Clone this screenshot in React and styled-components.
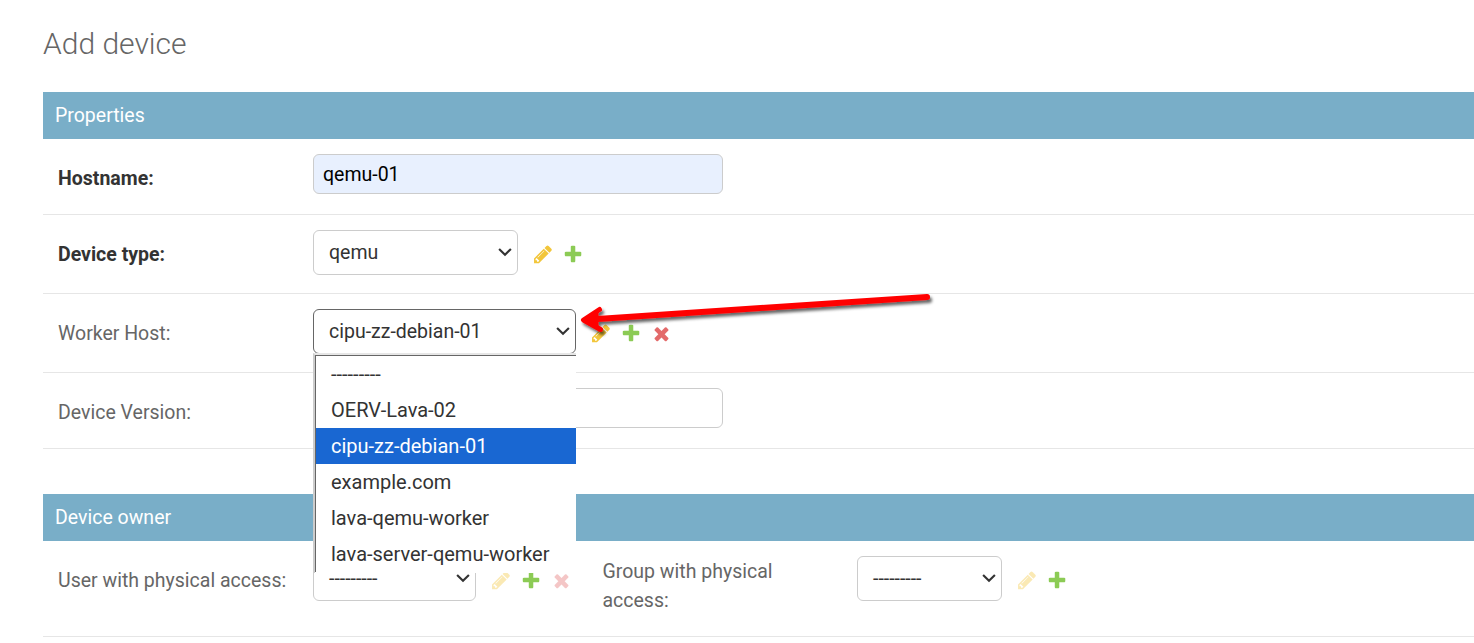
import React from "react";
import styled, { createGlobalStyle } from "styled-components";

const GlobalStyle = createGlobalStyle`
  *, *::before, *::after { box-sizing: border-box; }
  html, body { margin: 0; background: #fff; }
  body {
    font-family: Roboto, "Liberation Sans", sans-serif;
    font-size: 19.5px;
    color: #333;
    overflow: hidden;
  }
`;

const Page = styled.main`
  position: relative;
  width: 100%;
  height: 643px;
  padding: 26px 0 0 43px;
  overflow: hidden;
`;

const Title = styled.h1`
  margin: 0 0 30px;
  height: 36px;
  font-size: 30px;
  line-height: 36px;
  font-weight: 300;
  color: #666;
`;

const Fieldset = styled.section`
  margin-bottom: 45px;
`;

const SectionTitle = styled.h2`
  margin: 0;
  height: 47px;
  padding: 0 12px;
  font-size: 19.5px;
  line-height: 47px;
  font-weight: 400;
  color: #fff;
  background: #79aec8;
`;

const Row = styled.div`
  display: flex;
  align-items: flex-start;
  min-height: ${(p) => p.$height || 76}px;
  padding: 15px;
  border-bottom: 1px solid #e6e6e6;
`;

const Label = styled.label`
  flex: none;
  width: 255px;
  padding: ${(p) => (p.$wrapped ? "1px 40px 0 0.5px" : "10px 0 0")};
  line-height: 29px;
  color: ${(p) => (p.$required ? "#333" : "#666")};
  font-weight: ${(p) => (p.$required ? 700 : 400)};
`;

const FieldBox = styled.div`
  display: flex;
  flex: none;
  width: ${(p) => p.$width || "auto"};
`;

const TextInput = styled.input`
  width: 410px;
  height: 40px;
  padding: 0 9px;
  border: 1px solid #ccc;
  border-radius: 6px;
  font: inherit;
  color: #000;
  outline: none;
  background: ${(p) => (p.$filled ? "#e8f0fe" : "#fff")};
`;

const SelectWrap = styled.div`
  position: relative;
`;

const SelectButton = styled.div`
  display: flex;
  align-items: center;
  justify-content: space-between;
  width: ${(p) => p.$width}px;
  height: 45px;
  padding: 0 5px 1px 15px;
  border: 1px solid ${(p) => (p.$open ? "#666" : "#ccc")};
  border-radius: 6px;
  background: #fff;
`;

const Menu = styled.ul`
  position: absolute;
  z-index: 2;
  top: 44px;
  left: 0;
  width: 263px;
  height: 220px;
  margin: 0;
  padding: 0;
  list-style: none;
  font-size: 20px;
  background: #fff;
  border-left: 2px solid #ccc;
  border-top: 2px solid #e6e6e6;
  overflow: hidden;
`;

const MenuInner = styled.div`
  border-left: 1px solid #666;
  border-top: 1px solid #666;
`;

const Option = styled.li`
  height: 36px;
  padding-left: 15px;
  line-height: 36px;
  color: ${(p) => (p.$selected ? "#fff" : "#333")};
  background: ${(p) => (p.$selected ? "#1967d2" : "#fff")};
`;

const Actions = styled.div`
  display: flex;
  gap: 9.2px;
  padding: 13.5px 0 0 14.5px;
`;

const Icon = styled.svg`
  display: block;
  width: 21px;
  height: 21px;
  opacity: ${(p) => (p.$faded ? 0.3 : 0.8)};
`;

const Pointer = styled.svg`
  position: absolute;
  z-index: 3;
  left: 570px;
  top: 285px;
  pointer-events: none;
`;

const PENCIL =
  "M491 1536l91-91-235-235-91 91v107h128v128h107zm523-928q0-22-22-22-10 0-17 7l-542 542q-7 7-7 17 0 22 22 22 10 0 17-7l542-542q7-7 7-17zm-54-192l416 416-832 832h-416v-416zm683 96q0 53-37 90l-166 166-416-416 166-165q36-38 90-38 53 0 91 38l235 234q37 39 37 91z";
const PLUS =
  "M1600 796v192q0 40-28 68t-68 28h-416v416q0 40-28 68t-68 28h-192q-40 0-68-28t-28-68v-416h-416q-40 0-68-28t-28-68v-192q0-40 28-68t68-28h416v-416q0-40 28-68t68-28h192q40 0 68 28t28 68v416h416q40 0 68 28t28 68z";
const CROSS =
  "M1490 1322q0 40-28 68l-136 136q-28 28-68 28t-68-28l-294-294-294 294q-28 28-68 28t-68-28l-136-136q-28-28-28-68t28-68l294-294-294-294q-28-28-28-68t28-68l136-136q28-28 68-28t68 28l294 294 294-294q28-28 68-28t68 28l136 136q28 28 28 68t-28 68l-294 294 294 294q28 28 28 68z";

const Glyph = ({ d, fill, faded, origin = "0 0" }) => (
  <Icon viewBox={`${origin} 1792 1792`} $faded={faded}>
    <path d={d} fill={fill} />
  </Icon>
);

const RelatedActions = ({ faded, removable }) => (
  <Actions>
    <Glyph d={PENCIL} fill="#efb80b" faded={faded} origin="40 20" />
    <Glyph d={PLUS} fill="#70bf2b" origin="40 40" />
    {removable && <Glyph d={CROSS} fill="#dd4646" faded={faded} />}
  </Actions>
);

const Chevron = () => (
  <svg width="15" height="10" viewBox="0 0 15 10" fill="none">
    <path d="M2.1 1.9l5.9 5.9 5.9-5.9" stroke="#333" strokeWidth="2.1" />
  </svg>
);

const Select = ({ value, width, open, children }) => (
  <SelectWrap>
    <SelectButton $width={width} $open={open}>
      <span>{value}</span>
      <Chevron />
    </SelectButton>
    {children}
  </SelectWrap>
);

const hosts = [
  "---------",
  "OERV-Lava-02",
  "cipu-zz-debian-01",
  "example.com",
  "lava-qemu-worker",
  "lava-server-qemu-worker",
];

export default function App() {
  return (
    <>
      <GlobalStyle />
      <Page>
        <Title>Add device</Title>
        <Fieldset>
          <SectionTitle>Properties</SectionTitle>
          <Row>
            <Label $required>Hostname:</Label>
            <TextInput $filled defaultValue="qemu-01" />
          </Row>
          <Row $height={79}>
            <Label $required>Device type:</Label>
            <Select value="qemu" width={205} />
            <RelatedActions />
          </Row>
          <Row $height={79}>
            <Label>Worker Host:</Label>
            <Select value="cipu-zz-debian-01" width={263} open>
              <Menu>
                <MenuInner>
                  {hosts.map((h) => (
                    <Option key={h} $selected={h === "cipu-zz-debian-01"}>
                      {h}
                    </Option>
                  ))}
                </MenuInner>
              </Menu>
            </Select>
            <RelatedActions removable />
          </Row>
          <Row>
            <Label>Device Version:</Label>
            <TextInput />
          </Row>
        </Fieldset>
        <Fieldset>
          <SectionTitle>Device owner</SectionTitle>
          <Row $height={96}>
            <FieldBox $width="544px">
              <Label>User with physical access:</Label>
              <Select value="---------" width={163} />
              <RelatedActions faded removable />
            </FieldBox>
            <FieldBox>
              <Label $wrapped>Group with physical access:</Label>
              <Select value="---------" width={145} />
              <RelatedActions faded />
            </FieldBox>
          </Row>
        </Fieldset>
        <Pointer width="375" height="65" viewBox="570 285 375 65" fill="none">
          <defs>
            <filter id="shadow" x="-10%" y="-40%" width="120%" height="200%">
              <feDropShadow dx="2" dy="3" stdDeviation="1.5" floodColor="#000" floodOpacity="0.6" />
            </filter>
          </defs>
          <g filter="url(#shadow)" stroke="#f00" strokeLinecap="round" strokeLinejoin="round">
            <path d="M927 297L590 319.5" strokeWidth="6" />
            <path d="M599.5 309.5L583.5 320L600.5 329.5" strokeWidth="5" />
            <path d="M584 320L597 312V326Z" fill="#f00" strokeWidth="3" />
          </g>
        </Pointer>
      </Page>
    </>
  );
}
